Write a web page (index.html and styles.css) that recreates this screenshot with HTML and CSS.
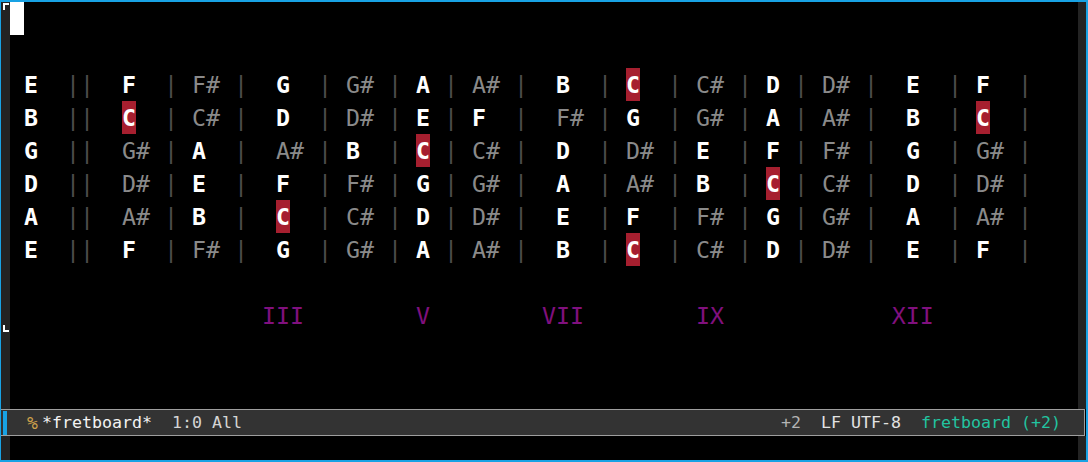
FILE: index.html
```html
<!DOCTYPE html>
<html>
<head>
<meta charset="utf-8">
<title>fretboard</title>
<link rel="stylesheet" href="styles.css">
</head>
<body>
<div class="frame">
  <div class="window">
    <div class="fringe-l">
      <svg class="ind-top" width="6" height="7" viewBox="0 0 6 7"><rect x="0" y="0" width="6" height="2" fill="#fff"/><rect x="0" y="0" width="2" height="7" fill="#fff"/></svg>
      <svg class="ind-bot" width="6" height="7" viewBox="0 0 6 7"><rect x="0" y="0" width="2" height="7" fill="#fff"/><rect x="0" y="5" width="6" height="2" fill="#fff"/></svg>
    </div>
    <div class="text">
<div class="line"><span class="cursor"> </span></div>
<div class="line"> </div>
<div class="line"> <span class="nat">E</span>  <span class="bar">||</span>  <span class="nat">F</span>  <span class="bar">|</span> <span class="shp">F#</span> <span class="bar">|</span>  <span class="nat">G</span>  <span class="bar">|</span> <span class="shp">G#</span> <span class="bar">|</span> <span class="nat">A</span> <span class="bar">|</span> <span class="shp">A#</span> <span class="bar">|</span>  <span class="nat">B</span>  <span class="bar">|</span> <span class="nat hl">C</span>  <span class="bar">|</span> <span class="shp">C#</span> <span class="bar">|</span> <span class="nat">D</span> <span class="bar">|</span> <span class="shp">D#</span> <span class="bar">|</span>  <span class="nat">E</span>  <span class="bar">|</span> <span class="nat">F</span>  <span class="bar">|</span></div>
<div class="line"> <span class="nat">B</span>  <span class="bar">||</span>  <span class="nat hl">C</span>  <span class="bar">|</span> <span class="shp">C#</span> <span class="bar">|</span>  <span class="nat">D</span>  <span class="bar">|</span> <span class="shp">D#</span> <span class="bar">|</span> <span class="nat">E</span> <span class="bar">|</span> <span class="nat">F</span>  <span class="bar">|</span>  <span class="shp">F#</span> <span class="bar">|</span> <span class="nat">G</span>  <span class="bar">|</span> <span class="shp">G#</span> <span class="bar">|</span> <span class="nat">A</span> <span class="bar">|</span> <span class="shp">A#</span> <span class="bar">|</span>  <span class="nat">B</span>  <span class="bar">|</span> <span class="nat hl">C</span>  <span class="bar">|</span></div>
<div class="line"> <span class="nat">G</span>  <span class="bar">||</span>  <span class="shp">G#</span> <span class="bar">|</span> <span class="nat">A</span>  <span class="bar">|</span>  <span class="shp">A#</span> <span class="bar">|</span> <span class="nat">B</span>  <span class="bar">|</span> <span class="nat hl">C</span> <span class="bar">|</span> <span class="shp">C#</span> <span class="bar">|</span>  <span class="nat">D</span>  <span class="bar">|</span> <span class="shp">D#</span> <span class="bar">|</span> <span class="nat">E</span>  <span class="bar">|</span> <span class="nat">F</span> <span class="bar">|</span> <span class="shp">F#</span> <span class="bar">|</span>  <span class="nat">G</span>  <span class="bar">|</span> <span class="shp">G#</span> <span class="bar">|</span></div>
<div class="line"> <span class="nat">D</span>  <span class="bar">||</span>  <span class="shp">D#</span> <span class="bar">|</span> <span class="nat">E</span>  <span class="bar">|</span>  <span class="nat">F</span>  <span class="bar">|</span> <span class="shp">F#</span> <span class="bar">|</span> <span class="nat">G</span> <span class="bar">|</span> <span class="shp">G#</span> <span class="bar">|</span>  <span class="nat">A</span>  <span class="bar">|</span> <span class="shp">A#</span> <span class="bar">|</span> <span class="nat">B</span>  <span class="bar">|</span> <span class="nat hl">C</span> <span class="bar">|</span> <span class="shp">C#</span> <span class="bar">|</span>  <span class="nat">D</span>  <span class="bar">|</span> <span class="shp">D#</span> <span class="bar">|</span></div>
<div class="line"> <span class="nat">A</span>  <span class="bar">||</span>  <span class="shp">A#</span> <span class="bar">|</span> <span class="nat">B</span>  <span class="bar">|</span>  <span class="nat hl">C</span>  <span class="bar">|</span> <span class="shp">C#</span> <span class="bar">|</span> <span class="nat">D</span> <span class="bar">|</span> <span class="shp">D#</span> <span class="bar">|</span>  <span class="nat">E</span>  <span class="bar">|</span> <span class="nat">F</span>  <span class="bar">|</span> <span class="shp">F#</span> <span class="bar">|</span> <span class="nat">G</span> <span class="bar">|</span> <span class="shp">G#</span> <span class="bar">|</span>  <span class="nat">A</span>  <span class="bar">|</span> <span class="shp">A#</span> <span class="bar">|</span></div>
<div class="line"> <span class="nat">E</span>  <span class="bar">||</span>  <span class="nat">F</span>  <span class="bar">|</span> <span class="shp">F#</span> <span class="bar">|</span>  <span class="nat">G</span>  <span class="bar">|</span> <span class="shp">G#</span> <span class="bar">|</span> <span class="nat">A</span> <span class="bar">|</span> <span class="shp">A#</span> <span class="bar">|</span>  <span class="nat">B</span>  <span class="bar">|</span> <span class="nat hl">C</span>  <span class="bar">|</span> <span class="shp">C#</span> <span class="bar">|</span> <span class="nat">D</span> <span class="bar">|</span> <span class="shp">D#</span> <span class="bar">|</span>  <span class="nat">E</span>  <span class="bar">|</span> <span class="nat">F</span>  <span class="bar">|</span></div>
<div class="line"> </div>
<div class="line roman">                  III        V        VII        IX            XII</div>
    </div>
    <div class="fringe-r"></div>
  </div>
  <div class="modeline">
    <span class="ml-bar"></span>
    <span class="ml-pct">%</span>
    <span class="ml-left"><span class="ml-buf">*fretboard*</span>  <span class="ml-pos">1:0 All</span></span>
    <span class="ml-right"><span class="ml-dim">+2</span>  <span class="ml-enc">LF UTF-8</span>  <span class="ml-mode">fretboard (+2)</span></span>
  </div>
  <div class="echo">
    <div class="fringe-l"></div>
    <div class="echo-text"></div>
    <div class="fringe-r"></div>
  </div>
</div>
</body>
</html>
```

FILE: styles.css
```css
html, body {
  margin: 0;
  padding: 0;
  background: #000;
}

.frame {
  width: 1088px;
  height: 462px;
  box-sizing: border-box;
  border: 2px solid #18a2e4;
  border-left-width: 1px;
  display: flex;
  flex-direction: column;
  background: #000;
  overflow: hidden;
}

.window {
  height: 407px;
  display: flex;
  flex: none;
}

.fringe-l {
  width: 9px;
  flex: none;
  background: #232323;
  display: flex;
  flex-direction: column;
}

.fringe-r {
  width: 8px;
  flex: none;
  background: #232323;
}

.ind-top {
  display: block;
  margin: 1px 0 0 2px;
}

.ind-bot {
  display: block;
  margin: 315px 0 0 2px;
}

.text {
  flex: 1;
  background: #000;
  font-family: "DejaVu Sans Mono", monospace;
  font-size: 23.25px;
  line-height: 33px;
  color: #fff;
}

.line {
  height: 33px;
  white-space: pre;
}

.cursor {
  display: inline-block;
  width: 14px;
  height: 33px;
  background: #fff;
  vertical-align: top;
}

.nat {
  font-weight: bold;
  color: #ffffff;
}

.shp {
  color: #8a8a8a;
}

.bar {
  color: #4c4c4c;
}

.hl {
  display: inline-block;
  height: 33px;
  vertical-align: top;
  background: #a61f2f;
}

.roman {
  color: #80107e;
}

.modeline {
  height: 27px;
  flex: none;
  box-sizing: border-box;
  border-top: 1px solid #9e9e9e;
  border-bottom: 1px solid #9e9e9e;
  border-right: 1px solid #9e9e9e;
  margin-right: 1px;
  background: #333333;
  display: flex;
  align-items: center;
  font-family: "DejaVu Sans Mono", monospace;
  font-size: 16.61px;
  white-space: pre;
  color: #d0d0d0;
}

.ml-bar {
  width: 4px;
  height: 24px;
  margin-left: 2px;
  background: #18a2e4;
}

.ml-pct {
  margin-left: 20px;
  color: #cfa24c;
  font-size: 18px;
  width: 10px;
}

.ml-left {
  margin-left: 5px;
}

.ml-buf {
  color: #f2f2f2;
}

.ml-pos {
  color: #d4d4d4;
}

.ml-right {
  margin-left: auto;
  padding-right: 23px;
}

.ml-dim {
  color: #b4b4b4;
}

.ml-enc {
  color: #e2e2e2;
}

.ml-mode {
  color: #22c4a0;
}

.echo {
  flex: 1;
  display: flex;
}

.echo-text {
  flex: 1;
  background: #000;
}
```
